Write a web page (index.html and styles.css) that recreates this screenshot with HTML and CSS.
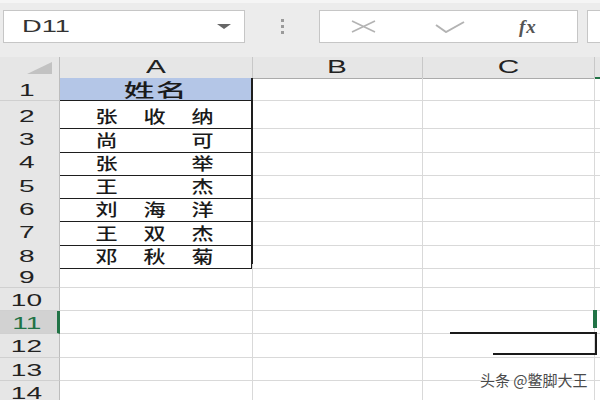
FILE: index.html
```html
<!DOCTYPE html>
<html lang="zh">
<head>
  <meta charset="UTF-8">
  <meta name="viewport" content="width=device-width, initial-scale=1">
  <title>姓名表</title>
  <link rel="stylesheet" href="styles.css">
</head>
<body>
  <div class="toolbar">
    <div class="namebox">
      <span class="sx ref">D11</span>
      <span class="caret"></span>
    </div>
    <div class="dots"><i></i><i></i><i></i></div>
    <div class="formula">
      <svg class="ico cancel" width="27" height="13" viewBox="0 0 27 13">
        <path d="M2 1 L25 12 M25 1 L2 12" stroke="#b3b3b3" stroke-width="1.6" fill="none"/>
      </svg>
      <svg class="ico ok" width="30" height="13" viewBox="0 0 30 13">
        <path d="M1 5 L11 12 L29 2" stroke="#b3b3b3" stroke-width="2" fill="none"/>
      </svg>
      <span class="fx">fx</span>
    </div>
    <div class="formula2"></div>
  </div>

  <div class="sheet">
    <div class="row head">
      <div class="rh corner"><span class="tri"></span></div>
      <div class="ch"><span class="sx">A</span></div>
      <div class="ch"><span class="sx">B</span></div>
      <div class="ch"><span class="sx">C</span></div>
      <div class="ch cur"></div>
    </div>

    <div class="row">
      <div class="rh"><span class="sx">1</span></div>
      <div class="c box title"><span class="sx">姓名</span></div>
      <div class="c"></div><div class="c"></div><div class="c"></div>
    </div>
    <div class="row">
      <div class="rh"><span class="sx">2</span></div>
      <div class="c box name"><span>张</span><span>收</span><span>纳</span></div>
      <div class="c"></div><div class="c"></div><div class="c"></div>
    </div>
    <div class="row">
      <div class="rh"><span class="sx">3</span></div>
      <div class="c box name"><span>尚</span><span>可</span></div>
      <div class="c"></div><div class="c"></div><div class="c"></div>
    </div>
    <div class="row">
      <div class="rh"><span class="sx">4</span></div>
      <div class="c box name"><span>张</span><span>举</span></div>
      <div class="c"></div><div class="c"></div><div class="c"></div>
    </div>
    <div class="row">
      <div class="rh"><span class="sx">5</span></div>
      <div class="c box name"><span>王</span><span>杰</span></div>
      <div class="c"></div><div class="c"></div><div class="c"></div>
    </div>
    <div class="row">
      <div class="rh"><span class="sx">6</span></div>
      <div class="c box name"><span>刘</span><span>海</span><span>洋</span></div>
      <div class="c"></div><div class="c"></div><div class="c"></div>
    </div>
    <div class="row">
      <div class="rh"><span class="sx">7</span></div>
      <div class="c box name"><span>王</span><span>双</span><span>杰</span></div>
      <div class="c"></div><div class="c"></div><div class="c"></div>
    </div>
    <div class="row">
      <div class="rh"><span class="sx">8</span></div>
      <div class="c box name"><span>邓</span><span>秋</span><span>菊</span></div>
      <div class="c"></div><div class="c"></div><div class="c"></div>
    </div>
    <div class="row">
      <div class="rh"><span class="sx">9</span></div>
      <div class="c"></div><div class="c"></div><div class="c"></div><div class="c"></div>
    </div>
    <div class="row">
      <div class="rh"><span class="sx">10</span></div>
      <div class="c"></div><div class="c"></div><div class="c"></div><div class="c"></div>
    </div>
    <div class="row">
      <div class="rh on"><span class="sx">11</span></div>
      <div class="c"></div><div class="c"></div><div class="c"></div><div class="c"></div>
    </div>
    <div class="row">
      <div class="rh"><span class="sx">12</span></div>
      <div class="c"></div><div class="c"></div><div class="c"></div><div class="c"></div>
    </div>
    <div class="row">
      <div class="rh"><span class="sx">13</span></div>
      <div class="c"></div><div class="c"></div><div class="c"></div><div class="c"></div>
    </div>
    <div class="row">
      <div class="rh"><span class="sx">14</span></div>
      <div class="c"></div><div class="c"></div><div class="c"></div><div class="c"></div>
    </div>

    <!-- selection marker and the stray lines over the grid -->
    <div class="mark"></div>
    <div class="stroke s1"></div>
    <div class="stroke s2"></div>
    <div class="stroke s3"></div>
  </div>

  <div class="watermark">头条 @鳖脚大王</div>
</body>
</html>
```

FILE: styles.css
```css
body {
  margin: 0;
  background: #fff;
  font-family: "Liberation Sans", Arial, sans-serif;
  color: #222;
  overflow: hidden;
  position: relative;
  height: 400px;
}
.sx {
  display: inline-block;
  transform: scaleX(1.65);
}

/* toolbar */
.toolbar {
  height: 57px;
  box-sizing: border-box;
  background: #ececec;
  border-top: 3px solid #f5f5f5;
  padding-top: 7px;
  display: flex;
  align-items: flex-start;
}
.namebox, .formula, .formula2 {
  height: 33px;
  box-sizing: border-box;
  background: #fff;
  border: 1px solid #c6c6c6;
}
.namebox {
  margin-left: 3px;
  width: 242px;
  display: flex;
  align-items: center;
  justify-content: space-between;
  padding: 0 13px 0 18px;
}
.ref {
  font-size: 16px;
  color: #333;
  transform-origin: left center;
  transform: scaleX(1.7);
}
.caret {
  border-left: 7px solid transparent;
  border-right: 7px solid transparent;
  border-top: 5px solid #666;
}
.dots {
  width: 74px;
  height: 33px;
  display: flex;
  flex-direction: column;
  align-items: center;
  justify-content: center;
  gap: 3px;
}
.dots i {
  width: 3px;
  height: 3px;
  background: #9a9a9a;
}
.formula {
  width: 259px;
  display: flex;
  align-items: center;
  padding-left: 30px;
}
.ok { margin-left: 58px; }
.fx {
  margin-left: 54px;
  font-family: "Liberation Serif", serif;
  font-style: italic;
  font-weight: bold;
  font-size: 19px;
  color: #555;
  letter-spacing: 1px;
}
.formula2 {
  margin-left: 9px;
  flex: 1;
  border-right: none;
}

/* grid */
.sheet {
  position: relative;
}
.row {
  display: grid;
  grid-template-columns: 60px 193px 170px 172px 1fr;
  height: 23.3px;
}
.row.head {
  height: 21px;
}
.rh, .ch, .c {
  box-sizing: border-box;
}
.rh {
  background: #e6e6e6;
  border-right: 1px solid #bdbdbd;
  border-bottom: 1px solid #d0d0d0;
  display: flex;
  align-items: center;
  justify-content: center;
  padding: 3px 6px 0 0;
  font-size: 17px;
  line-height: 17px;
  color: #222;
}
.rh.on {
  background: #d2d2d2;
  color: #217346;
  border-right: 3px solid #217346;
  padding-right: 4px;
}
.corner {
  border-bottom: 1px solid #ababab;
  justify-content: flex-start;
  align-items: flex-start;
  padding: 5px 0 0 27px;
}
.tri {
  width: 0;
  height: 0;
  border-left: 25px solid transparent;
  border-bottom: 12px solid #c2c2c2;
}
.ch {
  background: #e6e6e6;
  border-right: 1px solid #c8c8c8;
  border-bottom: 1px solid #ababab;
  text-align: center;
  font-size: 18px;
  line-height: 21px;
  color: #222;
}
.ch.cur {
  border-bottom: 2px solid #217346;
  border-right: none;
}
.c {
  border-right: 1px solid #d9d9d9;
  border-bottom: 1px solid #d9d9d9;
}
.row .c:last-child {
  border-right: none;
}

/* the boxed name list in column A */
.box {
  border-right: 2px solid #1e1e1e;
  border-bottom: 1px solid #1e1e1e;
  font-family: "Noto Sans CJK SC", sans-serif;
  font-weight: 500;
  color: #1a1a1a;
}
.title {
  background: #b4c6e7;
  text-align: center;
  font-size: 18px;
  line-height: 22px;
  letter-spacing: 1px;
}
.title .sx {
  transform: scaleX(1.7);
}
.name {
  display: flex;
  justify-content: space-between;
  align-items: center;
  padding: 2px 40px 0 38px;
  font-size: 17px;
}
.name span {
  display: inline-block;
  transform: scaleX(1.3);
}

/* overlays */
.mark {
  position: absolute;
  left: 593px;
  top: 253px;
  width: 4px;
  height: 18px;
  background: #217346;
}
.stroke {
  position: absolute;
  background: #1a1a1a;
}
.s1 { left: 450px; top: 275px; width: 147px; height: 2px; }
.s2 { left: 595px; top: 275px; width: 2px; height: 22px; }
.s3 { left: 493px; top: 296px; width: 104px; height: 2px; }

.watermark {
  position: absolute;
  left: 480px;
  top: 369px;
  font-family: "Noto Sans CJK SC", sans-serif;
  font-size: 15px;
  color: #4a4a4a;
  text-shadow: 0 0 2px #fff, 0 0 2px #fff;
}
```
